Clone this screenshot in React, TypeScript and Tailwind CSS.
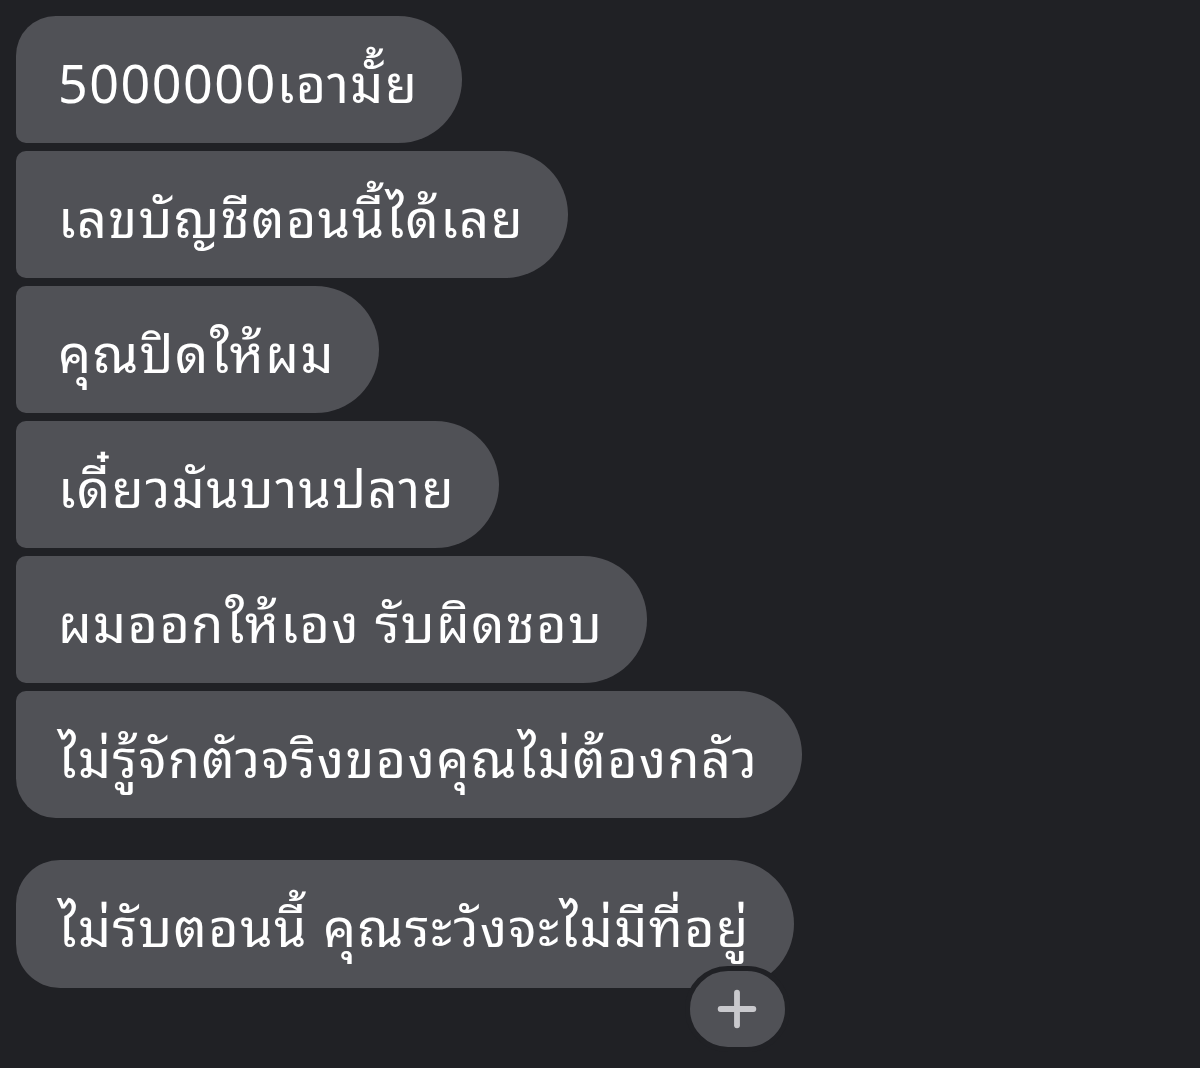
import { Plus } from "lucide-react";

const GROUP = [
  "5000000เอามั้ย",
  "เลขบัญชีตอนนี้ได้เลย",
  "คุณปิดให้ผม",
  "เดี๋ยวมันบานปลาย",
  "ผมออกให้เอง รับผิดชอบ",
  "ไม่รู้จักตัวจริงของคุณไม่ต้องกลัว",
];

const FONT = {
  fontFamily:
    '"Noto Sans Thai Looped", "Loma", "Garuda", "Noto Sans Thai", "Noto Sans", "Liberation Sans", sans-serif',
};

function corners(i: number, n: number) {
  if (n === 1) return "rounded-[44px] rounded-r-[64px]";
  if (i === 0) return "rounded-tl-[40px] rounded-bl-[10px] rounded-r-[64px]";
  if (i === n - 1) return "rounded-tl-[10px] rounded-bl-[40px] rounded-r-[64px]";
  return "rounded-l-[10px] rounded-r-[64px]";
}

export default function App() {
  return (
    <div className="min-h-[1068px] w-[1200px] bg-[#202125] pl-4 pt-4" style={FONT}>
      <div className="flex flex-col items-start gap-2">
        {GROUP.map((t, i) => (
          <div
            key={t}
            className={`flex h-[127px] items-center bg-[#505156] pl-[42px] pr-[44px] text-[52px] leading-none tracking-[1.5px] text-white ${corners(i, GROUP.length)}`}
          >
            {t}
          </div>
        ))}
      </div>

      <div className="relative mt-[42px] inline-block">
        <div className="flex h-[128px] items-center rounded-[44px] rounded-r-[64px] bg-[#505156] pl-[42px] pr-[44px] text-[52px] leading-none tracking-[1.5px] text-white">
          ไม่รับตอนนี้ คุณระวังจะไม่มีที่อยู่
        </div>
        {/* reaction button over the bubble corner */}
        <div className="absolute right-[4px] top-[106px] flex h-[86px] w-[105px] items-center justify-center rounded-full border-[5px] border-[#202125] bg-[#505156]">
          <Plus className="h-[56px] w-[56px] text-[#c9c9cd]" strokeWidth={2.5} />
        </div>
      </div>
    </div>
  );
}
